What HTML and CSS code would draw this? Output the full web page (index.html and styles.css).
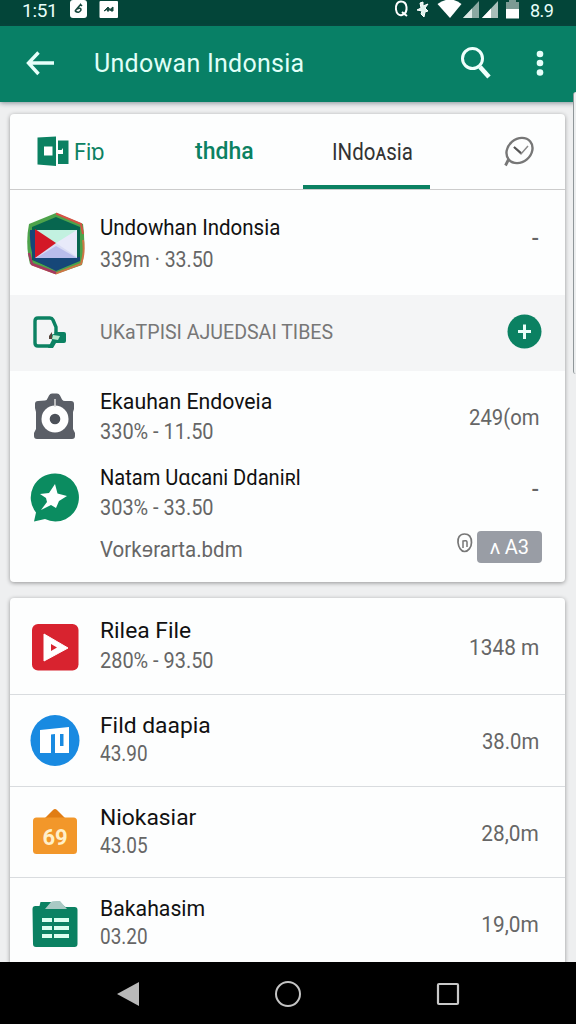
FILE: index.html
```html
<!DOCTYPE html>
<html lang="id">
<head>
<meta charset="utf-8">
<title>Undowan Indonsia</title>
<link rel="stylesheet" href="styles.css">
</head>
<body>
<div class="phone">
  <header class="status">
    <span class="clock">1:51</span>
    <svg class="status-left" viewBox="68 0 52 20">
      <rect x="70" y="0" width="17" height="18" rx="3" fill="#fff"/>
      <path d="M75 11l6-7M75 11q4 3 6-1q0-3-4-1M80 4l2 2" fill="none" stroke="#17483e" stroke-width="1.6"/>
      <rect x="99.500" y="1" width="18.500" height="17" rx="1" fill="#fff"/>
      <path d="M104 11l4-4 2 2.500 3-2.500 0 4-2 0-1-1.500-2 2-1-2z" fill="#17483e" stroke="#17483e" stroke-width="1"/>
    </svg>
    <svg class="status-right" viewBox="392 0 130 20">
      <path d="M401 1.500c-4 0-5.500 4-5 8s3 6.500 6 5.500 5-4 4.500-8-2-5.500-5.500-5.500zM402 12l5 4" fill="none" stroke="#fff" stroke-width="2"/>
      <path d="M420 3l3-1v4l5-2-3 4 3 3-3 1-1 5-3-3 1-3-5-1 4-2z" fill="#dff3ed" stroke="#fff" stroke-width="1"/>
      <path d="M437.500 4Q450-5 461.500 4L450 18z" fill="#fff"/>
      <path d="M463 18L479 1v17z" fill="#8ba9a2"/><path d="M463 18l9-9.500V18z" fill="#dce8e5"/>
      <path d="M482 18L498 1v17z" fill="#a9bfba"/><path d="M482 18l9-9.500V18z" fill="#fff"/>
      <path d="M506 2h3V0h7v2h3v7h-13z" fill="#7c9a94"/><path d="M506 9h13v9.500h-13z" fill="#fff"/>
    </svg>
    <span class="battery">8.9</span>
  </header>
  <div class="appbar">
    <svg class="back" viewBox="24 48 32 30"><path d="M54 62H29M38.500 51.500L28.500 62l10 11" fill="none" stroke="#e6fffa" stroke-width="3.400"/></svg>
    <h1 class="heading">Undowan Indonsia</h1>
    <svg class="search" viewBox="458 44 34 36"><circle cx="472.500" cy="58.500" r="10" fill="none" stroke="#f0fffc" stroke-width="3"/><path d="M480 67l9 10" stroke="#f0fffc" stroke-width="4.600" /></svg>
    <svg class="more" viewBox="530 48 20 30"><g fill="#e6fffa"><circle cx="540" cy="53" r="3.300"/><circle cx="540" cy="62" r="3.300"/><circle cx="540" cy="71.500" r="3.300"/></g></svg>
  </div>
  <main class="content">
    <div class="scrollbar"></div>
    <section class="card">
      <nav class="tabs">
        <div class="tab tab-first">
          <svg class="tab-icon" viewBox="36 134 34 34"><path d="M37.500 137.500L56 136.500v29.500l-18.500-1.500zM58 140.500h10.500v23.500H58z" fill="#0b8162"/><path d="M44 146.500h8.500v9h-8.500zM58 150h3.500l1.500-2v6h-5z" fill="#fff"/></svg>
          <span class="fit w94">Fiɒ</span>
        </div>
        <div class="tab tab-second"><span class="fit w100">thdha</span></div>
        <div class="tab tab-active"><span class="fit w89">INdoᴀsia</span></div>
        <svg class="tab-chat" viewBox="502 134 36 34"><ellipse cx="519.500" cy="150.500" rx="14" ry="11.500" transform="rotate(-40 519.500 150.500)" fill="none" stroke="#777" stroke-width="2.400"/><path d="M508.500 159.500l-3 6" stroke="#777" stroke-width="2.800"/><path d="M514 147l7 7 7-8" fill="none" stroke="#8b8b8b" stroke-width="1.500"/><path d="M514 147l7 6" stroke="#555" stroke-width="2.200"/></svg>
      </nav>
      <div class="row row-lead">
        <svg class="icon" viewBox="25 210 60 66">
          <path d="M56 213l27 11q3 22-1 41l-26 9-26-10q-5-20-1-40z" fill="#4da34b"/>
          <path d="M56 213.500l25 10.500 2 10" fill="none" stroke="#d65245" stroke-width="2"/>
          <path d="M83 240q2 13-2 24l-25 9.500-24-9" fill="none" stroke="#cf7545" stroke-width="2"/>
          <path d="M29 253l3 11 24 9" fill="none" stroke="#a43a60" stroke-width="2.500"/>
          <path d="M56 217l24 10v33l-24 10-24-10v-33z" fill="#07664f"/>
          <path d="M30 230l5 0v28l21 0 24-1v4l-24 10-22-11q-5-15-4-30z" fill="#164778"/>
          <path d="M35 230h42v28H35z" fill="#d9dcf5"/><path d="M36 230h41l-21 14z" fill="#c2f1e0"/><path d="M77 230v27L56 243z" fill="#e8eafa"/><path d="M36 258l20-12 21 12z" fill="#b8bdec"/><path d="M35 229v29l21-15z" fill="#d31827"/>
        </svg>
        <div class="text"><div class="title fit w93">Undowhan Indonsia</div><div class="sub fit w88">339m · 33.50</div></div>
        <div class="value value-dash">-</div>
      </div>
      <div class="row row-section">
        <svg class="icon" viewBox="25 299 60 66">
          <path d="M52 345H38q-3 0-3-3V320q0-3 3-3h12q2 0 3 2l3 7v6" fill="none" stroke="#0b8162" stroke-width="3.400"/>
          <path d="M56 328l1 3h7q2 0 2 2v7q0 2-2 2h-8l-3 5h-5l4-8-2-5 4-1z" fill="#0b8162"/><path d="M53 334l7 1-2 4-6-1z" fill="#b9e8cd"/><path d="M49 335l3-4v7h-3z" fill="#55433a"/>
        </svg>
        <div class="section-label"><span class="fit w93">UKaTPISI AJUEDSAI TIBES</span></div>
        <svg class="add" viewBox="507 314 35 35"><circle cx="524.500" cy="331.500" r="17" fill="#0b8162"/><path d="M518 331.500h13M524.500 324.500v14.500" stroke="#e8fff8" stroke-width="3"/></svg>
      </div>
      <div class="row row-camera">
        <svg class="icon" viewBox="25 384 60 66">
          <path d="M35 404q0-3 3-3l7-.5q2 0 3-3l1-2q1-2 3-2h5q2 0 3 2l2 4q1 1.500 3 1.500l6 0q3 0 3 3v5l-1 3v17l2 4v3q0 3-3 3H37q-3 0-3-3v-3l2-4v-17l-1-4z" fill="#5b5f67"/>
          <circle cx="55" cy="419" r="13.500" fill="#fff"/><circle cx="55" cy="419" r="5.300" fill="#4d5159"/><path d="M55 399v8" stroke="#ddd" stroke-width="1.500"/>
        </svg>
        <div class="text"><div class="title fit w97">Ekauhan Endoveia</div><div class="sub fit w90">330% - 11.50</div></div>
        <div class="value fit-right w92">249(om</div>
      </div>
      <div class="row row-chat">
        <svg class="icon" viewBox="25 464 60 66">
          <path d="M55 473.500a23.500 24 0 1 1-10 45.500L34 521.500l2-9A24 24 0 0 1 55 473.500z" fill="#0b8c60"/>
          <path d="M55 484l2.500 9.500 9.500 2.500-8 5-3 7-5-3-10 5 6-8-1-4-6-4 9-1z" fill="#fff"/>
        </svg>
        <div class="text"><div class="title fit w91">Natam Uɑcani Ddaniʀl</div><div class="sub fit w90">303% - 33.50</div><div class="sub sub-last fit w93">Vorkɘrarta.bdm</div></div>
        <div class="side">
          <div class="value value-dash">-</div>
          <div class="pill-line">
            <svg class="lock" viewBox="456 530 18 24"><path d="M464.500 533c-5 0-7 4-6.500 8.500s3 9 6.500 9 7-4 7-9-2-8.500-7-8.500z" fill="none" stroke="#777" stroke-width="1.700"/><path d="M463 547v-7q4-1 4 1v5" fill="none" stroke="#777" stroke-width="1.500"/></svg>
            <span class="pill">ᴧ A3</span>
          </div>
        </div>
      </div>
    </section>
    <section class="card card-list">
      <div class="row item item-first">
        <svg class="icon" viewBox="25 614 60 66"><rect x="32" y="624" width="46.500" height="46.500" rx="6" fill="#d8232f"/><path d="M44 634v27l24-13z" fill="#fff" stroke="#fff" stroke-linejoin="round"/><path d="M51 644v7l6-3.500z" fill="#d8232f"/></svg>
        <div class="text"><div class="title fit w103">Rilea File</div><div class="sub fit w90">280% - 93.50</div></div>
        <div class="value fit-right w94">1348 m</div>
      </div>
      <div class="row item">
        <svg class="icon" viewBox="25 707 60 66"><ellipse cx="55" cy="740.500" rx="24.500" ry="25.500" fill="#198ae1"/><path d="M40 730l29-3v26H40z" fill="#fff"/><path d="M51 734.500l4-.5v20h-4zM60 734h3.500v12h-3.500z" fill="#198ae1"/></svg>
        <div class="text"><div class="title fit w103">Fild daapia</div><div class="sub fit w87">43.90</div></div>
        <div class="value fit-right w92">38.0m</div>
      </div>
      <div class="row item">
        <svg class="icon" viewBox="25 799 60 66"><path d="M45 818l8-8q2-2 4 0l8 8z" fill="#e17d14"/><rect x="33" y="817.500" width="44" height="36.500" rx="3.500" fill="#f2972a"/><text x="55" y="844.500" text-anchor="middle" class="badge-text">69</text></svg>
        <div class="text"><div class="title fit w103">Niokasiar</div><div class="sub fit w87">43.05</div></div>
        <div class="value fit-right w94">28,0m</div>
      </div>
      <div class="row item">
        <svg class="icon" viewBox="25 890 60 66"><path d="M32.500 909q0-3 3-3h4l1-4h18l7 5h9q3 0 3 3v34q0 3-3 3H36q-3 0-3-3z" fill="#0b8162"/><path d="M45 909l6-7q1-1.500 9-1l7 8z" fill="#a9c9c4"/><path d="M42 918h10v4H42zM54 918h15v4H54zM42 926h10v4H42zM54 926h15v4H54zM42 934h10v4H42zM54 934h15v4H54z" fill="#dcfff0"/></svg>
        <div class="text"><div class="title fit w97">Bakahasim</div><div class="sub fit w87">03.20</div></div>
        <div class="value fit-right w94">19,0m</div>
      </div>
    </section>
  </main>
  <footer class="navbar">
    <svg class="nav-icon" viewBox="0 0 30 30"><path d="M4 15L26 3v24z" fill="#b9b9b9"/></svg>
    <svg class="nav-icon" viewBox="0 0 30 30"><circle cx="15" cy="15" r="12" fill="none" stroke="#c4c4c4" stroke-width="2"/></svg>
    <svg class="nav-icon" viewBox="0 0 30 30"><rect x="5" y="5" width="20" height="20" rx="1" fill="none" stroke="#c8c8c8" stroke-width="2.200"/></svg>
  </footer>
</div>
</body>
</html>
```
FILE: styles.css
```css
* { box-sizing: border-box; }
body { margin: 0; font-family: Roboto, "Noto Sans", sans-serif; color: #111; }
svg { display: block; flex: none; }
.phone { width: 576px; height: 1024px; display: flex; flex-direction: column; overflow: hidden; background: #eeeff0; }
.status { height: 26px; flex: none; display: flex; align-items: flex-start; background: #034539; color: #e8fffa; padding-left: 22px; }
.clock { width: 46px; font-size: 19px; line-height: 22px; letter-spacing: -.3px; white-space: nowrap; }
.status-left { width: 52px; height: 20px; }
.status-right { width: 130px; height: 20px; margin-left: 272px; }
.battery { font-size: 18px; line-height: 22px; margin-left: 8px; letter-spacing: -.5px; }
.appbar { height: 76px; flex: none; display: flex; align-items: center; background: #088066; padding: 0 26px 0 24px; position: relative; box-shadow: 0 1px 5px rgba(40,60,75,.55); }
.back { width: 32px; height: 30px; }
.heading { margin: 0 0 0 38px; flex: 1; font-size: 25px; line-height: 30px; font-weight: 400; letter-spacing: .27px; color: #e0fff8; white-space: nowrap; }
.search { width: 34px; height: 36px; margin: -4px 38px 0 0; }
.more { width: 20px; height: 30px; }
.content { flex: 1; min-height: 0; padding: 12px 11px 0 10px; position: relative; }
.scrollbar { position: absolute; right: 0; top: -10px; width: 3px; height: 282px; background: #eceeef; border-left: 1px solid #8f9699; border-radius: 3px 0 0 3px; }
.card { height: 468px; background: #fdfefe; border-radius: 4px; box-shadow: 0 1px 4px rgba(0,0,0,.38); overflow: hidden; }
.card-list { margin-top: 16px; height: 380px; }

/* Condensed text runs */
.fit { display: block; width: max-content; transform-origin: left center; }
.fit-right { transform-origin: right center; }
.w87 { transform: scaleX(.86); }
.w88 { transform: scaleX(.885); }
.w89 { transform: scaleX(.89); }
.w90 { transform: scaleX(.905); }
.w91 { transform: scaleX(.913); }
.w92 { transform: scaleX(.92); }
.w93 { transform: scaleX(.932); }
.w94 { transform: scaleX(.945); }
.w97 { transform: scaleX(.966); }
.w100 { transform: scaleX(1); }
.w103 { transform: scaleX(1.037); }

.tabs { height: 76px; display: flex; align-items: stretch; border-bottom: 1px solid #ccc; font-size: 23px; }
.tab { display: flex; align-items: center; white-space: nowrap; color: #0b8162; }
.tab-first { width: 185px; padding: 0 0 2px 26px; }
.tab-icon { width: 34px; height: 34px; margin-right: 4px; }
.tab-second { width: 108px; font-weight: 500; }
.tab-active { width: 127px; color: #333; border-bottom: 4px solid #0b8162; padding: 3px 0 0 29px; }
.tab-chat { width: 36px; height: 34px; margin: 20px 0 0 72px; }
.row { display: flex; padding: 0 26px 0 15px; }
.icon { width: 60px; height: 66px; }
.text { flex: 1; padding-left: 15px; white-space: nowrap; }
.title { font-size: 22px; line-height: 28px; color: #111; }
.sub { font-size: 22px; line-height: 28px; margin-top: 2px; color: #666; }
.value { font-size: 22px; line-height: 28px; color: #666; white-space: nowrap; }
.row-lead { height: 105px; padding-top: 20px; }
.row-lead .text { padding-top: 4px; }
.row-lead .sub { margin-top: 4px; }
.row-lead .value { padding-top: 15px; }
.row-section { height: 76px; background: #f4f5f6; align-items: center; padding-right: 23px; }
.section-label { flex: 1; padding: 0 0 2px 15px; font-size: 21px; color: #777; white-space: nowrap; }
.add { width: 35px; height: 35px; margin-top: -3px; }
.row-camera { height: 80px; padding-top: 13px; }
.row-camera .text { padding-top: 4px; }
.row-camera .value { padding-top: 20px; }
.row-chat { height: 130px; padding-top: 13px; padding-right: 23px; }
.row-chat .text { padding-top: 0; }
.row-chat .sub-last { margin-top: 14px; }
.side { display: flex; flex-direction: column; align-items: flex-end; }
.row-chat .value-dash { padding: 12px 3px 0 0; }
.value-dash { font-weight: 500; }
.pill-line { display: flex; align-items: flex-start; gap: 3px; margin-top: 27px; }
.lock { width: 18px; height: 24px; }
.pill { width: 65px; height: 32px; border-radius: 4px; background: #999da5; color: #fff; font-size: 20px; line-height: 32px; text-align: center; }
.item { height: 91.500px; padding-top: 12px; border-bottom: 1px solid #d9dcdf; }
.item .sub { margin-top: 0; }
.item .text { padding-top: 5px; }
.item .value { padding-top: 21px; }
.item-first { height: 97px; padding-top: 16px; }
.item-first .text { padding-top: 3px; }
.item-first .value { padding-top: 20px; }
.item-first .sub { margin-top: 2px; }
.badge-text { font-family: Roboto, sans-serif; font-size: 22px; font-weight: 700; fill: #fff0c9; }
.navbar { height: 62px; flex: none; background: #000; position: relative; display: flex; justify-content: space-between; align-items: center; padding: 4px 113px 2px; }
.nav-icon { width: 30px; height: 30px; }
```
